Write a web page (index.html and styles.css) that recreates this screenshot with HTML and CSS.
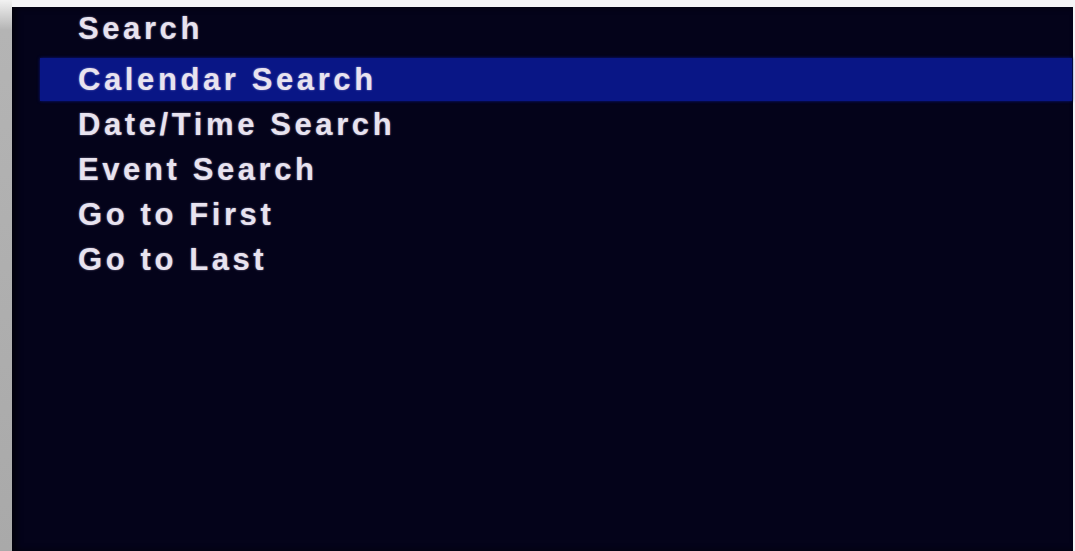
FILE: index.html
```html
<!DOCTYPE html>
<html lang="en">

<head>
    <meta charset="UTF-8">
    <meta name="viewport" content="width=device-width, initial-scale=1.0">
    <title>Search</title>
    <link rel="stylesheet" href="styles.css">
</head>

<body>
    <div class="monitor">
        <div class="bezel"></div>
        <div class="screen">
            <h1 class="menu-title">Search</h1>
            <ul class="menu">
                <li class="selected">Calendar Search</li>
                <li>Date/Time Search</li>
                <li>Event Search</li>
                <li>Go to First</li>
                <li>Go to Last</li>
            </ul>
        </div>
    </div>
</body>

</html>
```

FILE: styles.css
```css
html,
body {
    margin: 0;
    padding: 0;
    height: 100%;
    background-color: #f4f4f6;
}

.monitor {
    display: flex;
    height: 100%;
}

.bezel {
    width: 12px;
    background: linear-gradient(to bottom, #f2f2f2 0px, #b4b4b4 30px, #a9a9a9 100%);
}

.screen {
    flex: 1;
    margin-top: 7px;
    margin-right: 2px;
    background-color: #04031a;
    box-shadow: inset 4px 0 6px rgba(0, 0, 0, 0.6);
    font-family: "Liberation Sans", Arial, sans-serif;
    font-weight: bold;
    font-size: 31px;
    letter-spacing: 3.6px;
    color: #e8e3ef;
    text-shadow: 0 0 2px rgba(230, 220, 255, 0.6);
}

.menu-title {
    margin: 0 0 8px 0;
    padding-left: 66px;
    font-size: 31px;
    line-height: 43px;
}

.menu {
    list-style: none;
    margin: 0 1px 0 28px;
    padding: 0;
}

.menu li {
    line-height: 43px;
    height: 43px;
    margin-bottom: 2px;
    padding-left: 38px;
}

.menu li.selected {
    background-color: #091686;
    box-shadow: 0 0 3px #091686;
}
```
